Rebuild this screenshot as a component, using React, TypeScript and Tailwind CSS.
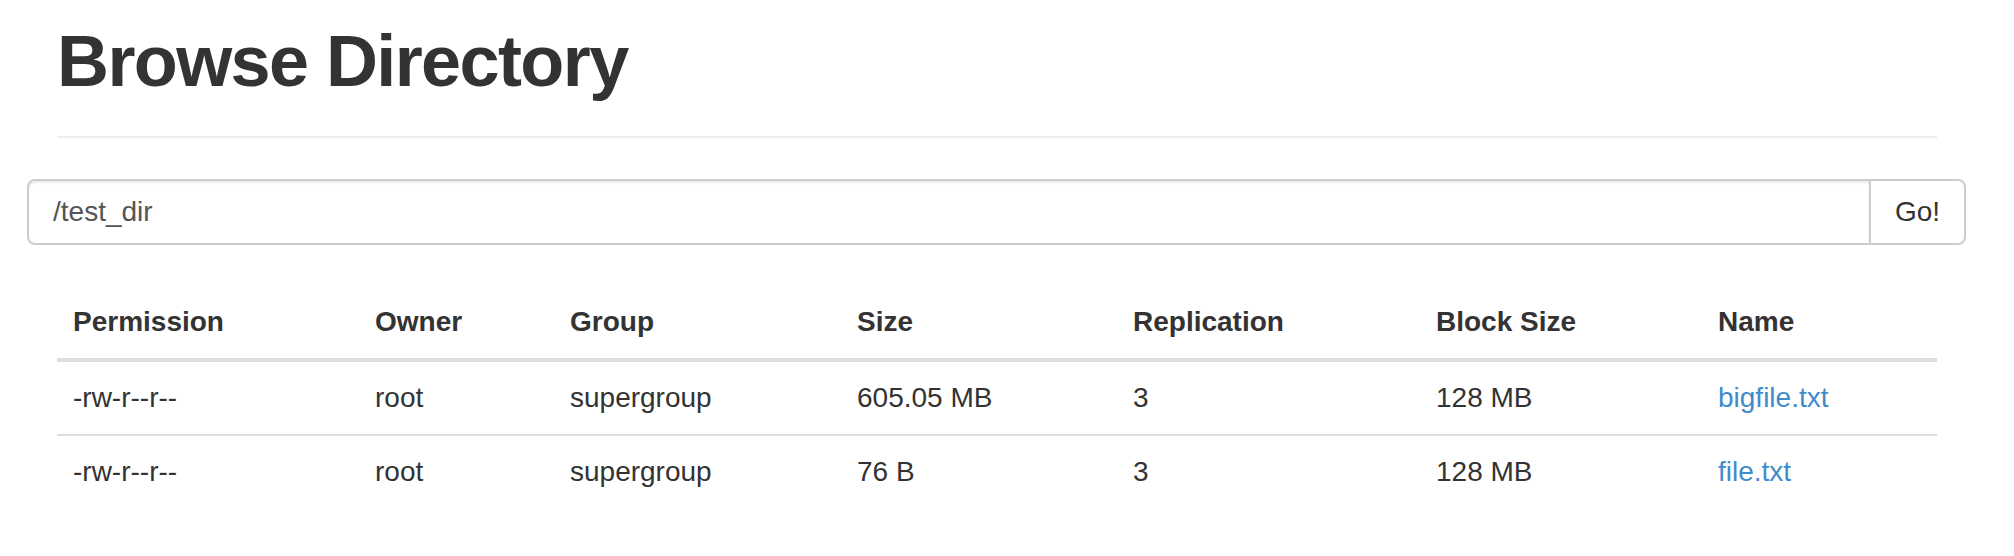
import React from 'react'

const columns = [
  { label: 'Permission', width: 'w-[302px]' },
  { label: 'Owner', width: 'w-[195px]' },
  { label: 'Group', width: 'w-[287px]' },
  { label: 'Size', width: 'w-[276px]' },
  { label: 'Replication', width: 'w-[303px]' },
  { label: 'Block Size', width: 'w-[282px]' },
  { label: 'Name', width: 'w-[235px]' },
]

const files = [
  { permission: '-rw-r--r--', owner: 'root', group: 'supergroup', size: '605.05 MB', replication: '3', blockSize: '128 MB', name: 'bigfile.txt' },
  { permission: '-rw-r--r--', owner: 'root', group: 'supergroup', size: '76 B', replication: '3', blockSize: '128 MB', name: 'file.txt' },
]

export default function App() {
  return (
    <div className="min-h-[556px] bg-white text-[#333] font-['Liberation_Sans',Arial,sans-serif]">
      {/* Page header */}
      <div className="pl-[57px] pr-[77px]">
        <div className="border-b-2 border-[#eee] pb-[35px]">
          <h1 className="pt-[22px] text-[72px] leading-[79px] font-bold tracking-[-1.6px]">
            Browse Directory
          </h1>
        </div>
      </div>

      {/* Path input */}
      <div className="mt-[41px] ml-[27px] w-[1939px] h-[66px] flex">
        <input
          type="text"
          value="/test_dir"
          readOnly
          className="flex-1 min-w-0 h-full border-2 border-[#ccc] rounded-l-[8px] px-[24px] text-[28px] leading-[40px] text-[#555] bg-white shadow-[inset_0_2px_2px_rgba(0,0,0,0.075)] outline-none"
        />
        <button className="w-[95px] h-full border-2 border-l-0 border-[#ccc] rounded-r-[8px] bg-white text-[28px] leading-[40px] text-[#333]">
          Go!
        </button>
      </div>

      {/* Listing */}
      <div className="pl-[57px] pr-[77px] mt-[41px]">
        <table className="w-[1880px] table-fixed border-separate border-spacing-0 text-[28px] leading-[40px]">
          <thead>
            <tr>
              {columns.map(col => (
                <th
                  key={col.label}
                  className={`${col.width} text-left font-bold px-[16px] py-[16px] border-b-4 border-[#ddd]`}
                >
                  {col.label}
                </th>
              ))}
            </tr>
          </thead>
          <tbody>
            {files.map((f, i) => {
              const cell = i === 0 ? 'px-[16px] py-[16px]' : 'px-[16px] py-[16px] border-t-2 border-[#ddd]'
              return (
                <tr key={f.name}>
                  <td className={cell}>{f.permission}</td>
                  <td className={cell}>{f.owner}</td>
                  <td className={cell}>{f.group}</td>
                  <td className={cell}>{f.size}</td>
                  <td className={cell}>{f.replication}</td>
                  <td className={cell}>{f.blockSize}</td>
                  <td className={cell}>
                    <a href="#" className="text-[#428bca]">{f.name}</a>
                  </td>
                </tr>
              )
            })}
          </tbody>
        </table>
      </div>
    </div>
  )
}
